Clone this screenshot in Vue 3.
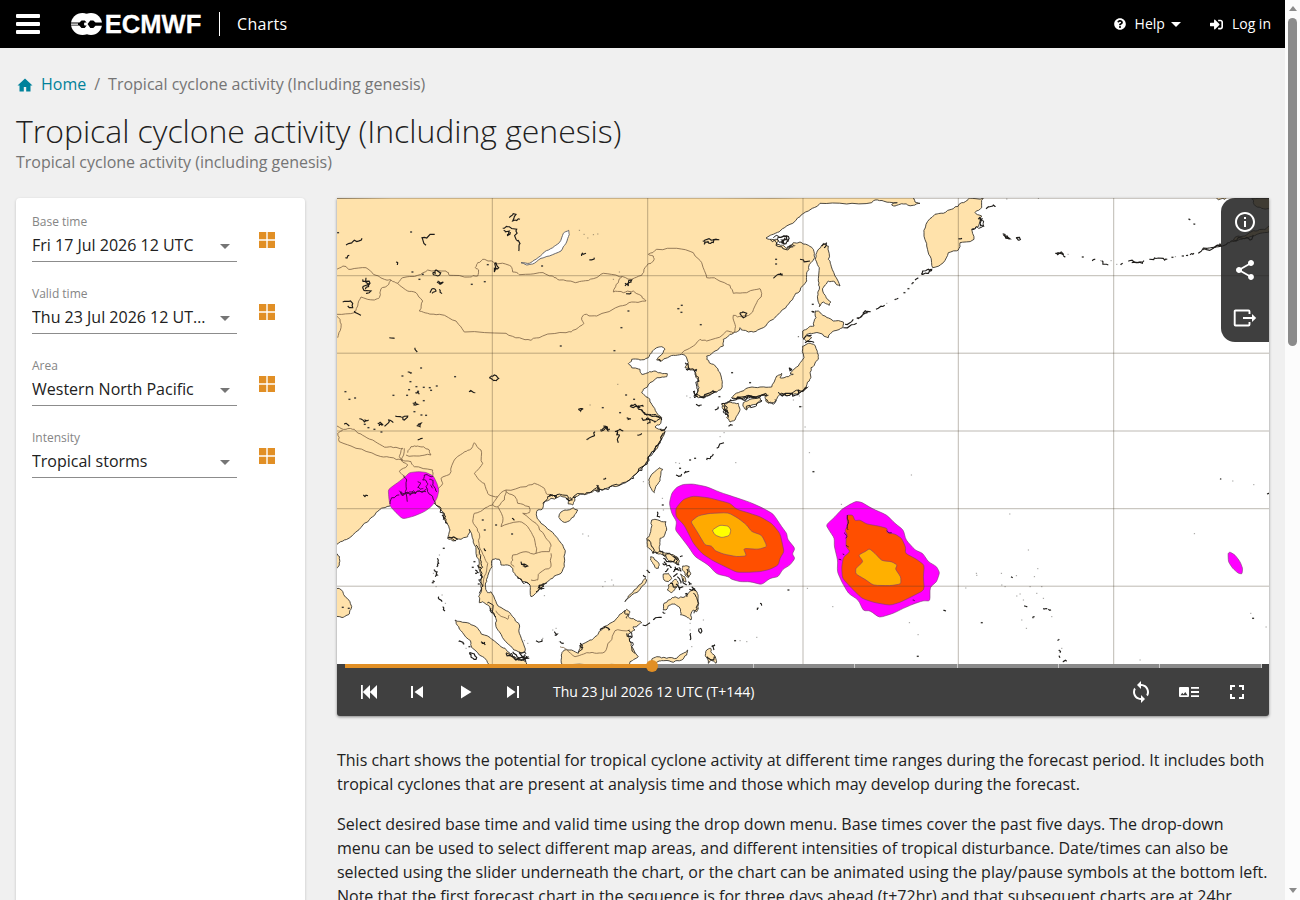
<script setup>
const fields = [
  { label: 'Base time', value: 'Fri 17 Jul 2026 12 UTC' },
  { label: 'Valid time', value: 'Thu 23 Jul 2026 12 UTC (T+144)' },
  { label: 'Area', value: 'Western North Pacific' },
  { label: 'Intensity', value: 'Tropical storms' }
]

// Map sheets: origin of each sheet on the chart; sheet units are a third of a pixel.
const sheets = { A: [336, 196], B: [560, 196], C: [336, 430], D: [560, 430], E: [780, 196], F: [800, 470], G: [1000, 0] }

let seed = 11
const rnd = () => {
  seed = (seed * 16807) % 2147483647
  return seed / 2147483647 - 0.5
}

// Turns "E 10,20 30,40 B 5,6" into chart points.
function points(src) {
  let o = sheets.A
  const out = []
  for (const tok of src.trim().split(/\s+/)) {
    if (sheets[tok]) o = sheets[tok]
    else {
      const [x, y] = tok.split(',').map(Number)
      out.push([o[0] + x / 3, o[1] + y / 3])
    }
  }
  return out
}

// Midpoint displacement gives shorelines their uneven edge.
function trace(src, rough = 0.3, closed = false) {
  let pts = points(src)
  if (closed) pts.push(pts[0])
  if (rough) {
    for (let k = 0; k < 2; k++) {
      const next = [pts[0]]
      for (let i = 1; i < pts.length; i++) {
        const [a, b] = [pts[i - 1], pts[i]]
        const len = Math.hypot(b[0] - a[0], b[1] - a[1])
        if (len > 2) {
          const d = Math.min(len, 6) * rough
          next.push([(a[0] + b[0]) / 2 + rnd() * d, (a[1] + b[1]) / 2 + rnd() * d])
        }
        next.push(b)
      }
      pts = next
    }
  }
  return 'M' + pts.map(p => p[0].toFixed(1) + ' ' + p[1].toFixed(1)).join('L') + (closed ? 'Z' : '')
}

// Closed outline with corners rounded off near each vertex.
function smooth(src) {
  const p = points(src)
  const n = p.length
  const mix = (a, b, t) => (a[0] + (b[0] - a[0]) * t).toFixed(1) + ' ' + (a[1] + (b[1] - a[1]) * t).toFixed(1)
  let d = 'M' + mix(p[0], p[1], 0.25)
  for (let i = 1; i <= n; i++) {
    const prev = p[i - 1], cur = p[i % n], next = p[(i + 1) % n]
    d += 'L' + mix(prev, cur, 0.75) + 'Q' + mix(cur, cur, 0) + ' ' + mix(cur, next, 0.25)
  }
  return d + 'Z'
}

const land = [
  'A -3,0 -3,6 E 420,2 400,8 405,18 420,22 400,28 370,24 345,30 335,27 352,20 310,15 285,12 275,20 200,24 120,22 85,45 60,62 30,85 0,105 B 640,115 618,126 635,130 655,132 650,145 668,148 680,158 700,152 E 20,155 40,140 60,138 85,148 100,160 104,185 88,205 80,230 80,255 60,285 40,305 20,330 0,350 B 640,370 610,395 580,408 550,403 540,395 530,408 510,415 490,430 490,450 465,465 440,480 440,490 460,505 475,525 485,550 483,580 470,588 440,600 415,605 405,600 417,575 415,550 405,535 410,520 390,522 375,515 385,500 375,478 365,475 340,478 305,495 290,492 300,480 315,460 305,452 290,455 275,470 265,485 240,492 215,490 205,503 215,515 240,520 245,535 265,530 285,525 300,530 322,533 320,542 300,545 270,560 250,580 245,590 265,605 275,625 290,650 305,665 300,685 285,693 305,700 D 315,5 300,35 285,60 265,80 255,105 230,130 200,155 180,165 150,170 120,178 90,188 70,192 40,202 45,210 38,225 25,222 25,205 0,197 C 645,205 625,215 620,235 605,240 602,258 615,280 640,300 665,325 680,345 687,370 685,410 675,430 650,445 625,462 605,485 585,500 582,465 560,455 545,440 530,415 515,405 495,405 490,388 470,388 468,410 460,425 455,440 448,465 455,488 465,485 480,515 490,530 515,543 530,560 548,580 550,610 562,640 567,665 555,668 530,655 505,630 490,605 480,590 478,560 470,545 455,525 440,515 430,518 428,500 437,480 437,440 430,400 420,360 412,330 400,298 395,320 375,328 350,333 335,325 342,300 330,275 320,245 300,225 275,190 250,185 200,190 162,228 130,240 110,260 85,280 50,315 25,330 3,343 -4,343',
  'C -3,372 4,372 11,390 10,405 3,415 -3,418',
  'C -3,475 6,475 22,490 38,510 46,535 40,552 22,562 -3,562',
  'C 357,570 375,575 400,580 425,595 445,615 475,632 495,650 515,665 530,680 560,690 575,705 460,705 440,680 410,655 405,640 385,615 368,590',
  'C 680,705 676,675 685,660 700,660 D 55,670 60,645 90,630 105,620 125,600 150,580 175,560 190,545 200,538 210,545 205,560 225,570 245,578 235,585 220,590 225,600 205,612 210,635 215,650 235,680 210,695 205,705',
  'D 272,705 275,690 290,680 320,685 350,685 370,670 383,660 380,675 365,690 340,697 310,692 290,697 280,705',
  'D 275,270 300,272 318,275 320,300 312,320 300,325 298,350 300,365 315,370 335,375 355,385 350,395 330,385 312,378 295,372 278,370 262,350 260,325 272,305',
  'D 272,380 285,390 297,400 295,415 285,412 275,395',
  'D 318,372 340,374 358,392 352,404 336,394 322,388',
  'D 368,408 388,410 392,430 385,443 375,435 367,420',
  'D 310,432 325,430 335,445 325,455 312,450',
  'D 338,455 348,448 355,460 345,475 335,488 322,480 325,465',
  'D 362,432 374,440 378,456 368,450',
  'D 310,540 312,520 325,510 345,500 355,505 375,500 385,490 400,480 412,490 415,525 410,545 400,540 395,545 393,570 380,560 362,555 357,530 345,522 330,525 318,540',
  'D 195,515 205,498 230,475 255,445 260,450 240,478 215,495',
  'D 290,120 300,113 308,118 300,145 290,165 283,188 270,170 266,150',
  'D 0,250 15,240 40,233 53,240 42,260 22,275 8,275 -4,262',
  'D 440,660 452,655 458,672 466,680 468,700 455,690 445,700 437,680',
  'B 485,625 510,618 535,622 540,640 525,672 510,678 500,665 505,650 490,640',
  'B 550,620 570,610 600,605 605,615 590,625 570,632 560,642 550,632',
  'B 515,605 535,590 565,575 600,573 635,573 650,540 665,532 660,545 685,542 700,535 E 30,532 55,510 72,485 68,450 85,442 105,448 112,470 115,490 103,508 93,515 92,540 88,555 78,578 60,590 40,595 15,598 0,595 B 655,588 660,595 640,620 625,622 615,605 625,598 605,598 585,605 560,602 530,610',
  'E 105,345 115,345 135,360 160,375 190,378 188,395 160,405 145,425 120,412 100,412 80,415 95,425 80,437 68,425 68,405 85,395 102,390 108,365',
  'E 125,148 130,142 145,150 145,190 152,205 165,240 180,270 165,258 145,255 133,270 128,285 138,305 152,318 148,328 130,318 118,332 114,315 118,280 115,255 118,215 106,190 112,165',
  'E 568,6 545,20 520,38 490,52 465,55 438,85 432,110 440,150 450,180 458,215 490,200 505,170 535,162 540,140 582,130 575,100 595,92 605,60 585,50 605,35 610,6',
  'G 640,590 680,592 675,598 655,599',
  'G 755,596 810,594 810,628 785,625 770,620 760,608',
  'G 690,726 705,712 735,708 760,692 790,688 808,678 808,695 780,700 760,708 740,715 720,718'
].map(s => trace(s, 0.34, true))

const lakes = ['A 555,200 580,202 600,190 625,168 650,155 670,140 682,112 698,103 700,115 690,142 675,165 640,180 615,187 590,204 572,207'].map(s => trace(s, 0.12, true))

// Deeply indented stretches of coast get extra dark outlines.
const rugged = [
  'D 315,5 300,35 285,60 265,80 255,105 230,130 200,155 180,165 150,170 120,178 90,188 70,192 40,202',
  'D 310,8 298,38 283,58 262,85 250,108 228,132',
  'D 115,165 118,185 108,178',
  'C 620,220 635,205 660,203 680,195 700,205 720,203',
  'B 385,520 410,522 408,540 418,555 412,580 405,600 425,603 450,595 470,588',
  'B 400,585 410,595 404,606 414,602',
  'B 245,640 255,650 270,655 300,668 285,675',
  'B 515,605 540,608 570,600 600,603 620,598', 'B 488,630 500,640 495,655 505,665', 'B 492,625 498,640 490,648 502,655',
  'B 558,640 570,628 590,622 605,612', 'B 618,612 635,622 645,610',
  'E 0,595 15,592 30,598 45,585 60,590 75,575 85,572',
  'C 300,225 315,235 325,250 322,268 335,280', 'C 335,325 350,328 360,332',
  'C 420,345 430,370 435,400 438,430 436,460 430,490', 'C 545,440 560,458 582,465', 'C 600,485 610,465 632,458', 'C 605,475 622,460 615,480',
  'C 550,665 570,670 560,685 578,680', 'C 510,668 530,680 550,690', 'C 555,675 565,690 572,678', 'C 455,520 470,540 480,560',
  'D 320,372 340,380 355,390 345,400', 'D 262,330 275,350 280,370', 'D 400,490 412,510 412,535 402,550', 'D 283,366 300,362 318,376',
  'D 205,600 215,612 208,630 215,650 225,670', 'D 60,645 65,660 55,665', 'D 195,540 205,555 200,565',
  'B 630,130 650,140 660,152 690,155 705,148', 'B 640,125 655,120 670,135', 'E 575,100 590,92 610,90 600,70'
].map(s => trace(s, 0.8))

const borders = [
  'A 0,218 20,210 45,220 90,215 120,238 145,250 165,252 185,262 200,245 245,238 275,222 330,225 340,238 400,243 425,240 428,222 418,215 425,200 440,190 475,200 520,208 530,228 550,236 610,230 650,240 670,252 718,260 B 70,255 100,248 130,232 180,243 215,250 245,238 255,215 280,195 280,180 265,175 290,160 350,157 400,170 425,200 440,245 470,250 510,268 520,292 560,290 600,278 605,292 590,320 570,355 545,362 520,358 525,385 520,412 500,405 490,415 440,435 420,430 400,450 365,472',
  'A 165,252 155,268 135,278 130,305 115,312 75,303 65,330 55,350 0,355',
  'A 185,262 215,285 240,290 260,315 250,345 275,352 310,355 360,375 385,408 510,412 550,425 585,433 620,420 690,410 720,400 B 48,400 72,382 65,365 80,355 110,360 180,330 215,318 258,315 245,300 220,285 190,290 160,288 175,260 185,243',
  'A 0,355 12,370 15,395 5,425',
  'A 3,690 30,700 55,700 80,718 C 110,30 140,48 165,50 200,55 190,80 200,90 160,82 120,75 60,55 10,35 5,10 20,0',
  'C 215,68 225,50 245,48 262,50 280,60 285,75 250,78 210,75',
  'C 195,90 225,95 235,110 290,120 290,135',
  'C 205,55 195,90 215,105 190,125 210,145 210,180',
  'C 300,185 320,160 315,145 345,125 355,90 380,70 400,60 415,38 435,60 440,100 415,130 430,150 445,160 455,190 485,200 510,180 570,170 595,160 625,175 630,190 650,200',
  'C 485,200 470,225 485,230 505,210 510,180',
  'C 470,225 440,240 415,250 412,280 430,310 430,350 445,380 455,400 450,430 440,470',
  'C 510,185 540,205 545,220 580,230 580,248 560,250 600,280 625,315 645,345 640,365 600,370 570,365 530,375 525,400 535,410',
  'C 485,230 500,260 495,290 550,275 575,290 595,325 600,370',
  'C 645,370 645,410 610,430 605,450 585,450',
  'C 480,542 490,555 515,568 520,555',
  'D 0,650 20,658 45,680 80,668 110,670 135,665 150,635 165,602 210,600'
].map(s => trace(s, 0.32))

// Small islands, reservoirs and lakes drawn as short dark strokes.
const details = [
  'A 30,147 55,133 78,127', 'A 296,115 258,125 270,148', 'A 500,97 520,92 542,100 540,130 550,145 548,165', 'A 503,103 520,105 515,120 523,108', 'A 520,65 540,55 530,75 552,70',
  'A 80,250 102,262 80,275 105,285 90,292', 'A 90,245 100,265 88,280', 'A 290,232 300,222 314,230 305,240 290,232', 'A 480,200 488,215 475,228 480,200', 'A 20,318 50,322 50,335 35,330', 'A 282,290 295,278 300,285 288,292', 'A 305,255 322,258 312,265 303,258', 'A 310,280 318,293', 'A 160,425 176,427', 'A 237,455 244,468', 'A 460,545 475,537 488,547 475,553 460,545', 'A 180,198 184,207', 'A 28,185 40,178', 'A 55,345 75,358',
  'A 70,668 85,678 98,672', 'A 125,682 140,686 130,690', 'A 145,690 158,672 172,680', 'A 178,660 195,663 215,660 205,672 200,665', 'A 242,690 255,682 252,692 245,690', 'A 230,622 245,625 232,627', 'A 400,588 418,590', 'A 238,590 250,595', 'A 25,685 40,690', 'A 215,528 228,530',
  'B 428,135 450,130 478,131', 'B 432,145 445,135 452,142 470,130', 'B 195,270 215,252 205,270 195,262', 'B 198,293 214,290', 'B 65,180 78,172', 'B 88,192 103,185', 'B 540,350 560,352 550,365 540,350', 'B 640,245 655,235 668,238', 'B 655,125 680,120 685,135 665,140 675,125',
  'B 210,632 225,625 235,638 250,632', 'B 212,634 228,630 240,636', 'B 235,640 255,655 285,660 305,672', 'B 245,665 275,672 285,680', 'B 258,668 270,680 262,684', 'B 55,640 68,638 62,645 55,640', 'B 120,702 135,690 150,700', 'B 122,706 138,695 148,705', 'B 130,690 142,700', 'B 170,718 180,700 190,705', 'B 300,700 320,692', 'B 200,665 212,670', 'B 405,585 412,600', 'B 418,603 450,590 465,588', 'B 408,625 425,627', 'B 376,500 388,518 378,520', 'B 295,490 303,495',
  'B 485,625 500,620 512,612 530,608 560,606 595,600 620,600', 'B 490,640 505,652', 'B 465,640 475,632', 'B 505,690 518,688', 'B 530,605 550,612 575,600 590,605', 'B 688,515 695,520 690,524 688,515',
  'E 0,595 30,592 45,598 55,582 70,585 78,572', 'E 195,385 220,370', 'E 190,395 230,382', 'E 230,365 250,350 272,347 250,355 232,367', 'E 288,340 314,328', 'E 344,312 355,307', 'E 395,265 402,260', 'E 405,252 415,245', 'E 424,235 440,222 455,220 440,232 425,235', 'E 618,38 640,27 645,33', 'E 668,113 690,128', 'E 708,127 720,132', 'E 60,190 90,195', 'E 5,122 20,120 22,132 5,132 12,145', 'E 75,440 102,440', 'E 70,430 95,418', 'E 125,150 140,140 132,155', 'E 95,345 103,350', 'E 595,70 608,68 600,82 612,92', 'E 535,128 545,126', 'E 0,232 8,234',
  'G 10,704 30,716 20,706', 'G 48,713 62,720', 'G 166,760 185,757 190,765 170,762', 'G 190,768 196,772', 'G 277,783 286,778', 'G 305,782 325,795', 'G 362,795 368,790', 'G 385,784 410,788 432,782', 'G 395,788 425,786', 'G 448,778 475,774 502,778', 'G 545,768 552,768', 'G 558,766 564,765', 'G 570,764 582,760', 'G 595,760 620,745 655,740 690,728', 'G 610,750 640,745 660,735', 'G 645,742 660,732 665,740', 'G 565,658 571,660', 'G 580,672 586,673', 'G 700,720 740,712 750,720 760,705',
  'C 304,385 308,400 302,410', 'C 293,420 303,425 298,440', 'C 290,452 296,455', 'C 308,500 318,515', 'C 320,530 327,543', 'C 368,635 385,643', 'C 400,670 415,672 420,688 405,680 400,670', 'C 435,635 448,645', 'C 437,640 446,636', 'C 555,395 575,408 560,408', 'C 245,30 260,25', 'C 82,195 96,197', 'C 318,255 325,265', 'C 338,320 365,328', 'C 425,405 435,415', 'C 418,420 428,428', 'C 432,435 440,440', 'C 465,535 470,550', 'C 510,670 540,690 575,680', 'C 530,665 550,685', 'C 550,668 570,695', 'C 545,690 580,685', 'C 600,632 618,628', 'C 655,605 664,612 656,615', 'C 610,465 625,475', 'C 445,355 450,362', 'C 640,198 660,205', 'C 690,205 710,210', 'C 528,265 536,270',
  'D 80,30 95,20 105,5', 'D 165,5 178,15 175,38', 'D 232,15 245,10', 'D 130,148 138,144', 'D 440,90 452,80 460,72', 'D 470,55 492,38', 'D 348,135 365,132', 'D 372,130 388,124', 'D 110,165 115,185', 'D 310,385 325,395 345,388', 'D 350,395 358,405', 'D 308,400 320,405', 'D 345,410 355,420 340,425', 'D 325,415 315,425', 'D 352,440 362,460', 'D 370,445 380,465', 'D 355,472 370,470', 'D 330,460 350,470', 'D 340,440 352,430', 'D 260,420 270,428', 'D 250,435 258,442', 'D 248,585 270,578', 'D 280,570 305,562', 'D 308,545 316,550', 'D 395,470 405,478', 'D 385,455 395,462', 'D 420,595 422,610', 'D 600,520 605,527', 'D 418,595 422,610', 'D 592,540 596,534', 'D 392,610 390,630', 'D 455,650 465,645 462,660', 'D 440,680 455,690 465,680', 'D 120,600 135,590 150,598', 'D 200,610 215,620', 'D 60,640 65,655', 'D 360,380 368,378', 'D 340,378 350,390', 'D 292,245 300,262', 'D 0,635 6,640', 'D 318,408 335,412', 'D 380,418 386,440', 'D 312,395 318,402', 'D 348,462 358,480', 'D 388,478 408,482', 'D 375,492 382,500', 'D 356,412 364,424',
  'F 430,421 438,423', 'F 633,320 638,323', 'F 730,415 742,417', 'F 745,418 753,419', 'F 672,408 682,411', 'F 698,445 704,440', 'F 772,511 778,508', 'F 776,540 780,548', 'F 776,558 780,563', 'F 788,575 800,574', 'F 1260,26 1264,28', 'F 1401,72 1407,69'
].map(s => trace(s, 0.7))

const specks = points('A 255,516 199,540 223,557 241,572 263,574 281,575 302,570 285,583 219,581 213,598 172,598 246,586 263,614 28,587 40,610 57,606 357,542 235,647 256,657 270,658 97,695 115,700 136,708 86,685 225,108 6,110 407,265 446,257 455,206 618,210 674,450 250,250 260,235 229,228 B 355,338 365,328 364,349 422,386 205,345 184,395 163,464 648,190 648,204 128,635 198,597 180,650 222,610 516,530 570,560 478,602 E 60,632 373,290 385,278 98,325 G 248,771 517,772 C 323,355 290,458 440,270 446,300 480,285 528,312 20,532 38,535 400,650 680,640 415,395 420,430 410,412 430,450 428,462 D 685,480 360,115 390,90 405,85 525,632 308,225 F 40,5 545,458 353,559 1359,445')

const faint = points('B 58,103 72,115 83,126 100,116 113,114 353,338 90,627 173,565 715,422 380,600 390,605 160,250 178,228 E 55,422 65,632 75,693 58,600 320,322 40,612 G 204,763 333,782 350,793 526,770 302,782 115,595 20,597 C 310,375 292,430 300,470 318,495 328,520 390,655 620,625 670,635 650,600 660,595 575,640 565,632 625,497 425,375 D 347,98 358,100 250,155 307,205 310,240 527,98 480,20 492,8 68,312 85,318 135,455 155,450 160,465 128,470 430,570 390,580 390,600 395,650 540,632 560,635 590,622 748,68 F 334,15 629,132 685,240 713,296 529,310 530,316 604,310 649,317 605,345 615,350 660,372 650,378 670,390 710,370 730,385 725,350 690,350 703,320 679,475 665,450 755,440 354,494 328,458 98,410 22,355 497,354 1183,191 1352,430 1398,471 1298,33 1361,44 1020,570 785,535 124,103')

const storms = [
  { c: '#ff00ff', s: 'C 157,178 185,158 208,140 220,128 245,125 270,127 292,138 302,158 309,180 303,205 288,228 265,245 235,258 200,267 180,248 162,228 158,200' },
  { c: '#ff00ff', s: 'D 335,190 350,172 370,163 400,162 440,170 480,187 520,200 570,217 610,235 640,252 665,290 680,310 683,328 705,355 697,372 705,385 690,405 668,418 655,440 630,445 605,464 570,455 540,455 515,448 505,440 470,432 445,405 405,380 385,350 362,320 346,300 350,275 335,250 328,220' },
  { c: '#ff4f00', s: 'D 347,235 370,208 400,198 445,203 480,212 510,220 530,238 570,250 600,260 635,280 660,310 668,345 672,365 660,385 655,405 630,418 600,425 560,427 530,427 495,410 455,390 425,370 400,340 385,310 372,285 348,260' },
  { c: '#ffaa00', s: 'D 392,275 415,257 450,250 505,248 535,265 560,285 575,305 605,315 622,350 595,358 550,355 560,378 530,380 490,372 465,362 455,348 435,345 420,320 405,295' },
  { c: '#ffff00', s: 'D 456,300 480,285 505,288 513,300 508,317 485,323 465,315' },
  { c: '#ff00ff', s: 'F 78,165 105,140 125,118 150,103 168,94 185,97 215,115 260,135 285,160 310,180 318,210 345,240 368,250 385,275 410,290 419,308 410,335 390,352 390,393 370,392 340,402 310,415 280,430 238,443 210,422 190,422 175,390 145,370 125,335 112,305 113,270 103,230 103,205 90,185' },
  { c: '#ff4f00', s: 'F 140,135 158,135 165,152 180,150 200,162 235,168 262,175 260,188 285,192 305,205 317,232 316,250 350,268 373,285 370,320 373,360 335,380 300,397 270,406 220,397 185,385 155,355 127,325 125,290 130,262 150,245 138,230 138,210 142,195 135,182 143,165' },
  { c: '#ffb000', s: 'F 175,255 195,245 208,236 225,250 245,272 275,275 292,285 286,297 302,320 303,342 270,347 220,346 195,328 167,312 167,295 190,275' },
  { c: '#ff00ff', s: 'F 1284,250 1290,246 1305,255 1320,275 1328,295 1326,312 1315,310 1298,295 1285,275' }
].map(o => ({ c: o.c, d: smooth(o.s) }))

const stormLines = ['C 202,140 212,150 208,185 214,215', 'C 162,222 167,203 190,195', 'C 190,182 198,195 215,186 225,192 245,184 270,185', 'C 192,188 205,192 220,186 235,190 250,182 262,186 272,176', 'C 195,184 200,198 212,188 222,196 232,182 240,192', 'C 245,155 255,160 245,172 253,178 262,175', 'C 292,138 265,135 260,150 275,160 270,170 285,195 298,222', 'C 280,148 292,152 290,165 303,185', 'C 283,165 290,175', 'F 142,135 144,150 142,165 145,180', 'F 132,188 141,200 137,205', 'F 138,226 146,231', 'F 116,268 124,270', 'F 128,252 133,254', 'F 260,182 275,188', 'F 338,390 344,392'].map(s => trace(s, 0.4))

const ticks = [33.4, 44.46, 55.5, 66.7, 77.8, 88.8, 99.9]
</script>

<template>
  <div class="page">
    <div class="main">
      <header class="topbar">
        <div class="burger"><i></i><i></i><i></i></div>
        <svg class="logo" width="132" height="24" viewBox="70 12 132 24">
          <g fill="#fff"><ellipse cx="82.500" cy="24" rx="11.500" ry="11" /><ellipse cx="91" cy="24" rx="11" ry="11" /></g>
          <path d="M85.800 12v2l1.500-2zM85.500 36l1.500-1.500L88.500 36z" fill="#000" />
          <path d="M70 22.400h9.500l2-2h3.200l2 2.200h-2.200a2.500 2.500 0 0 0 0 3h2.200l-2 2.400h-3.200l-2.300-2.400H70v-.8h8v-1.400h-8z" fill="#000" />
          <path d="M87.500 24l2.800-3.600h3l2.200 2H103v3.400h-7.500l-2.200 2.200h-3z" fill="#000" />
          <text x="104.800" y="33.400" textLength="96.500" lengthAdjust="spacingAndGlyphs">ECMWF</text>
        </svg>
        <span class="sep"></span>
        <span class="app-name">Charts</span>
        <nav class="user">
          <svg width="12" height="12" viewBox="0 0 512 512"><path d="M504 256c0 137-111 248-248 248S8 393 8 256C8 119 119 8 256 8s248 111 248 248zM262.700 90c-54.500 0-89.300 23-116.500 63.800-3.600 5.200-2.400 12.400 2.700 16.200l34.700 26.300c5.200 4 12.600 3 16.600-2.100 17.900-22.700 30.100-35.800 57.300-35.800 20.500 0 45.700 13.100 45.700 33 0 15-12.300 22.600-32.500 33.900C247 238.500 216 255 216 296v4c0 6.600 5.400 12 12 12h56c6.600 0 12-5.400 12-12v-1.300c0-28.500 83.200-29.700 83.200-106.700 0-58-60.200-102-116.500-102zM256 338a46 46 0 1 0 0 92 46 46 0 0 0 0-92z" /></svg>
          <span class="help">Help</span>
          <i class="caret"></i>
          <svg class="login-icon" width="13" height="13" viewBox="0 0 512 512"><path d="M416 448h-84c-6.600 0-12-5.400-12-12v-40c0-6.600 5.400-12 12-12h84c17.700 0 32-14.300 32-32V160c0-17.700-14.300-32-32-32h-84c-6.600 0-12-5.400-12-12V76c0-6.600 5.400-12 12-12h84c53 0 96 43 96 96v192c0 53-43 96-96 96zm-47-209L201 71c-15-15-41-4.500-41 17v96H24c-13.300 0-24 10.700-24 24v96c0 13.300 10.700 24 24 24h136v96c0 21.500 26 32 41 17l168-168c9.300-9.400 9.300-24.600 0-34z" /></svg>
          <span>Log in</span>
        </nav>
      </header>

      <div class="crumbs">
        <svg width="16" height="14" viewBox="0 0 16 14"><path d="M8 .5L.5 7.500h2V13.500h4.300V9h2.400v4.500h4.300V7.500h2z" fill="#00829b" /></svg>
        <a>Home</a><span class="slash">/</span><span>Tropical cyclone activity (Including genesis)</span>
      </div>
      <h1>Tropical cyclone activity (Including genesis)</h1>
      <p class="subtitle">Tropical cyclone activity (including genesis)</p>

      <div class="columns">
        <aside class="panel">
          <div v-for="f in fields" :key="f.label" class="field">
            <div class="select">
              <label>{{ f.label }}</label>
              <div class="value"><span>{{ f.value }}</span><i></i></div>
            </div>
            <svg width="16" height="16" viewBox="0 0 16 16"><path d="M0 0h7.300v7.300H0zM8.700 0H16v7.300H8.700zM0 8.700h7.300V16H0zM8.700 8.700H16V16H8.700z" fill="#e18f25" /></svg>
          </div>
        </aside>

        <section class="content">
          <div class="viewer">
            <svg class="map" width="932" height="466" viewBox="337 198 932 466">
              <rect x="337" y="198" width="932" height="466" fill="#fff" />
              <g fill="#ffe2ab" stroke="#3a3730" stroke-width=".9" stroke-linejoin="round"><path v-for="(d, i) in land" :key="i" :d="d" /></g>
              <g fill="#fff" stroke="#59595f" stroke-width=".9"><path v-for="(d, i) in lakes" :key="i" :d="d" /></g>
              <g fill="none" stroke="#82684a" stroke-width=".85"><path v-for="(d, i) in borders" :key="i" :d="d" /></g>
              <g fill="none" stroke="#1d1b18" stroke-width=".95"><path v-for="(d, i) in rugged" :key="i" :d="d" /></g>
              <g fill="none" stroke="#1d1b18" stroke-width="1.150"><path v-for="(d, i) in details" :key="i" :d="d" /></g>
              <g fill="#3c3a36"><rect v-for="(p, i) in specks" :key="i" :x="p[0] - 0.9" :y="p[1] - 0.7" width="2" height="1.400" /></g>
              <g fill="#3c3a36" fill-opacity=".5"><rect v-for="(p, i) in faint" :key="i" :x="p[0] - 0.5" :y="p[1] - 0.5" width="1.200" height="1" /></g>
              <g stroke="#7b3c73" stroke-width=".6"><path v-for="(o, i) in storms" :key="i" :d="o.d" :fill="o.c" /></g>
              <g fill="none" stroke="#3a0836" stroke-width=".9"><path v-for="(d, i) in stormLines" :key="i" :d="d" /></g>
              <path d="M492.300 198v466M647.700 198v466M803 198v466M958.300 198v466M1113.700 198v466M337 275.700h932M337 353.200h932M337 431h932M337 508.700h932M337 586.200h932M337 198.300h932" fill="none" stroke="#463c28" stroke-opacity=".4" stroke-width=".9" />
            </svg>
            <div class="tools">
              <svg viewBox="0 0 24 24"><path d="M11 7h2v2h-2zm0 4h2v6h-2zm1-9C6.480 2 2 6.480 2 12s4.480 10 10 10 10-4.480 10-10S17.520 2 12 2zm0 18c-4.410 0-8-3.590-8-8s3.590-8 8-8 8 3.590 8 8-3.590 8-8 8z" /></svg>
              <svg viewBox="0 0 24 24"><path d="M18 16.080c-.76 0-1.440.3-1.960.77L8.910 12.700c.05-.23.09-.46.09-.7s-.04-.47-.09-.7l7.050-4.110c.54.5 1.250.81 2.040.81 1.660 0 3-1.340 3-3s-1.340-3-3-3-3 1.340-3 3c0 .24.04.47.09.7L8.040 9.810C7.500 9.310 6.790 9 6 9c-1.660 0-3 1.340-3 3s1.340 3 3 3c.79 0 1.500-.31 2.040-.81l7.120 4.160c-.05.21-.08.43-.08.65 0 1.610 1.310 2.920 2.920 2.920s2.920-1.310 2.920-2.920-1.310-2.920-2.920-2.920z" /></svg>
              <svg viewBox="0 0 24 24"><path d="M16.500 8V5.500a1 1 0 0 0-1-1h-13a.8.800 0 0 0-.8.800v13.400a.8.800 0 0 0 .8.800h13a1 1 0 0 0 1-1V16" fill="none" stroke="#fff" stroke-width="1.900" /><path d="M10 11h9V8l4.200 4-4.200 4v-3h-9z" /></svg>
            </div>
            <div class="slider">
              <div class="track">
                <div class="done"></div>
                <i v-for="t in ticks" :key="t" :style="{ left: t + '%' }"></i>
                <b></b>
              </div>
            </div>
            <div class="controls">
              <svg viewBox="0 0 24 24"><path d="M4 5h1.800v14H4zM13 5v14L5.800 12zM20 5v14l-7.200-7z" /></svg>
              <svg viewBox="0 0 24 24"><path d="M6 6h2v12H6zM18 6v12l-8.500-6z" /></svg>
              <svg viewBox="0 0 24 24"><path d="M8 5.500v13l10.500-6.500z" /></svg>
              <svg viewBox="0 0 24 24"><path d="M6 6v12l8.500-6zM16 6h2v12h-2z" /></svg>
              <span class="time">Thu 23 Jul 2026 12 UTC (T+144)</span>
              <svg viewBox="0 0 24 24"><path d="M12 4V1L8 5l4 4V6c3.310 0 6 2.690 6 6 0 1.010-.25 1.970-.7 2.800l1.460 1.460C19.540 15.030 20 13.570 20 12c0-4.420-3.580-8-8-8zm0 14c-3.310 0-6-2.690-6-6 0-1.010.25-1.970.7-2.800L5.240 7.740C4.460 8.970 4 10.430 4 12c0 4.420 3.580 8 8 8v3l4-4-4-4v3z" /></svg>
              <svg viewBox="0 0 24 24"><path d="M14 7h8v1.800h-8zM14 11.100h8v1.800h-8zM14 15.200h8V17h-8zM3 7h8a1 1 0 0 1 1 1v8a1 1 0 0 1-1 1H3a1 1 0 0 1-1-1V8a1 1 0 0 1 1-1zm.5 8.300h7L8.300 12l-1.800 2.200-1.300-1.400z" fill-rule="evenodd" /></svg>
              <svg viewBox="0 0 24 24"><path d="M7 14H5v5h5v-2H7v-3zm-2-4h2V7h3V5H5v5zm12 7h-3v2h5v-5h-2v3zM14 5v2h3v3h2V5h-5z" /></svg>
            </div>
          </div>
          <p>This chart shows the potential for tropical cyclone activity at different time ranges during the forecast period. It includes both tropical cyclones that are present at analysis time and those which may develop during the forecast.</p>
          <p>Select desired base time and valid time using the drop down menu. Base times cover the past five days. The drop-down menu can be used to select different map areas, and different intensities of tropical disturbance. Date/times can also be selected using the slider underneath the chart, or the chart can be animated using the play/pause symbols at the bottom left. Note that the first forecast chart in the sequence is for three days ahead (t+72hr) and that subsequent charts are at 24hr</p>
        </section>
      </div>
    </div>
    <div class="scrollbar"><i class="up"></i><i class="thumb"></i><i class="down"></i></div>
  </div>
</template>

<style>
body { margin: 0; overflow: hidden; }
</style>

<style scoped>
.page { display: flex; width: 1300px; height: 900px; overflow: hidden; background: #f0f0f0; font-family: "Open Sans", "Noto Sans", sans-serif; font-size: 16px; line-height: 24px; color: #212121; }
.main { width: 1285px; height: 900px; overflow: hidden; }
.topbar { height: 48px; background: #000; color: #fff; display: flex; align-items: center; }
.burger { width: 24px; height: 20px; margin-left: 16px; display: flex; flex-direction: column; justify-content: space-between; }
.burger i { height: 4px; background: #fff; border-radius: 1px; }
.logo { margin-left: 30px; overflow: visible; }
.logo text { font: bold 26.500px "Liberation Sans", sans-serif; fill: #fff; stroke: #fff; stroke-width: .3; }
.sep { width: 1px; height: 24px; background: #fff; margin-left: 17px; }
.app-name { margin-left: 17px; letter-spacing: .3px; }
.user { margin-left: auto; margin-right: 14px; display: flex; align-items: center; font-size: 14px; }
.user svg { fill: #fff; }
.help { margin-left: 9px; }
.caret { border: 5px solid transparent; border-top-color: #fff; border-bottom: 0; margin-left: 6px; }
.login-icon { margin: 0 9px 0 29px; }
.crumbs { display: flex; align-items: center; height: 24px; margin: 24px 0 0 17px; color: #757575; }
.crumbs svg { position: relative; top: 1px; }
.crumbs a { color: #00829b; margin-left: 8px; }
.slash { margin: 0 8px; }
h1 { margin: 15px 0 0 16px; font-weight: 300; font-size: 32px; line-height: 40px; letter-spacing: -.04px; }
.subtitle { margin: -1px 0 0 16px; color: #757575; letter-spacing: -.02px; }
.columns { display: flex; margin: 24px 16px 0; gap: 32px; }
.panel { box-sizing: border-box; width: 289px; height: 760px; background: #fff; border-radius: 4px; box-shadow: 0 1px 3px rgba(0, 0, 0, .2); padding: 16px; }
.field { display: flex; height: 72px; }
.field svg { margin: 18px 0 0 22px; }
.select { width: 205px; height: 47px; border-bottom: 1px solid #8c8c8c; }
.select label { display: block; font-size: 12px; line-height: 16px; color: #858585; }
.value { display: flex; align-items: center; margin-top: 3px; }
.value span { width: 176px; overflow: hidden; white-space: nowrap; text-overflow: ellipsis; }
.value i { border: 5px solid transparent; border-top-color: #757575; border-bottom: 0; margin: 2px 0 0 12px; }
.content { width: 932px; }
.content p { margin: 0 0 16px; letter-spacing: -.008px; }
.viewer { position: relative; height: 518px; margin-bottom: 32px; background: #404040; box-shadow: 0 1px 3px rgba(0, 0, 0, .45); border-radius: 0 0 3px 3px; }
.map { display: block; }
.tools { position: absolute; top: 0; right: 0; width: 48px; height: 144px; background: rgba(32, 32, 32, .86); border-radius: 14px 0 0 14px; display: flex; flex-direction: column; align-items: center; justify-content: space-around; }
.tools svg, .controls svg { width: 24px; height: 24px; fill: #fff; }
.slider { padding: 0 7px 0 8px; }
.track { position: relative; height: 4px; background: #8a8a8a; }
.done { width: 307px; height: 4px; background: #e18f25; }
.track i { position: absolute; top: 0; width: 1px; height: 4px; background: #ccc; }
.track b { position: absolute; left: 301px; top: -4px; width: 12px; height: 12px; border-radius: 50%; background: #e18f25; }
.controls { display: flex; align-items: center; height: 48px; padding: 0 20px; gap: 24px; color: #fff; font-size: 14px; }
.time { margin-left: 4px; margin-right: auto; }
.scrollbar { width: 15px; height: 900px; background: #fcfcfc; display: flex; flex-direction: column; align-items: center; }
.up { margin-top: 6px; border: 4.500px solid transparent; border-bottom: 5px solid #8b8b8b; border-top: 0; }
.thumb { width: 9px; height: 328px; margin-top: 7px; border-radius: 5px; background: #8b8b8b; }
.down { margin-top: auto; margin-bottom: 7px; border: 4.500px solid transparent; border-top: 5px solid #8b8b8b; border-bottom: 0; }
</style>
